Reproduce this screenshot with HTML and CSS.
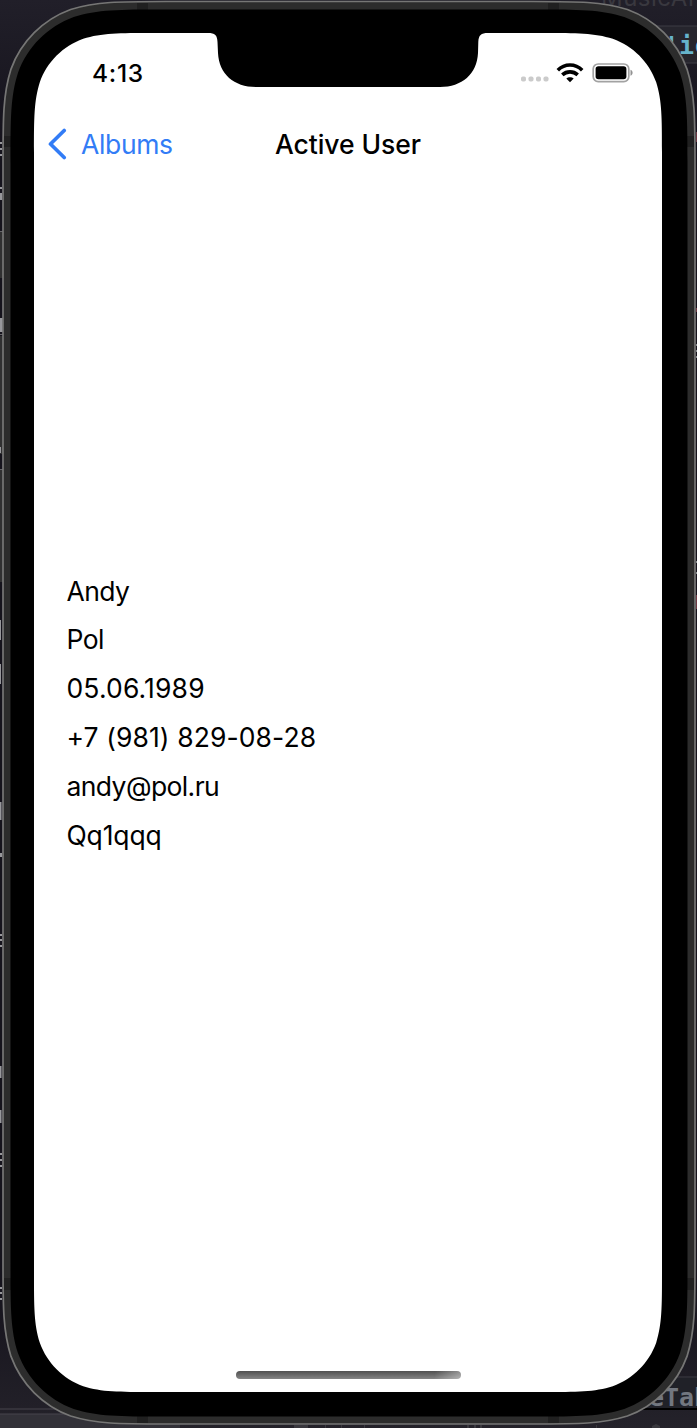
FILE: index.html
```html
<!DOCTYPE html>
<html lang="en">
<head>
<meta charset="utf-8">
<title>Active User</title>
<link rel="stylesheet" href="styles.css">
</head>
<body>
<main class="stage">
  <svg class="backdrop" viewBox="0 0 697 1428" aria-hidden="true">
    <defs>
      <linearGradient id="desk" x1="0" y1="0" x2="0" y2="1">
        <stop offset="0" stop-color="#211f29"/><stop offset=".1" stop-color="#15131c"/>
        <stop offset=".9" stop-color="#15131c"/><stop offset="1" stop-color="#24222a"/>
      </linearGradient>
    </defs>
    <rect width="697" height="1428" fill="url(#desk)"/>
    <rect x="600" y="26" width="97" height="37" fill="#26252d"/>
    <path d="M600 26H697M600 63H697M660 1377H697" stroke="#3d3c44"/>
    <text class="code dim" x="601" y="6">MusicAPI</text>
    <text class="code type" x="664" y="54">'ic</text>
    <rect x="640" y="1378" width="57" height="30" fill="#202128"/>
    <text class="code tab" x="649" y="1406">eTab</text>
    <path d="M640 1409H697" stroke="#000" stroke-width="2"/>
    <rect y="1414" width="180" height="14" fill="#323138"/>
    <path d="M0 1409H60M0 1414H80" stroke="#46454c"/>
    <path d="M0 232h4v46H0zM0 336h4v118H0zM0 470h4v112H0z" fill="#303031"/>
    <path d="M0 231.500h3M0 334.500h3M0 469.500h3" stroke="#66666a"/>
    <path d="M0 142h2v2H0zM0 148h2v2H0zM0 154h2v2H0zM0 187h2v2H0zM0 193h2v7H0zM0 318h3v14H0zM0 447h1v6H0zM0 620h1v20H0zM0 664h1v20H0zM0 802h1.500v18H0zM0 853h2v4H0zM0 934h2v2H0zM0 939h2v2H0zM0 945h2v2H0zM0 1066h1.500v12H0zM0 1110h1.500v13H0zM0 1153h2v2H0zM0 1159h2v2H0zM0 1165h2v2H0zM0 1287h2v2H0zM0 1292h2v2H0zM0 1298h2v2H0z" fill="#98989c"/>
    <path d="M696 344h1v2h-1zM696 350h1v2h-1zM696 356h1v2h-1zM696 561h1v2h-1zM696 572h1v2h-1z" fill="#82878a"/>
    <path d="M696 132h1v10h-1zM696 308h1v4h-1zM696 595h1v14h-1z" fill="#6c3843"/>
    <path d="M294 1425h14v3h-14zM325 1425h1v3h-1zM341 1425h1v3h-1zM364 1425h1v3h-1zM467 1425h2v3h-2zM474 1425h2v3h-2zM480 1425h2v3h-2zM596 1425h1v3h-1zM652 1426l4-2 4 2v2h-8z" fill="#39383e"/>

    <path d="M3 165.100c0-47.100 0-70.700 8-96 10.100-27.700 31.900-49.500 59.600-59.600 25.300-8 48.900-8 96-8H531.400c47.100 0 70.700 0 96 8 27.700 10.100 49.500 31.900 59.600 59.600 8 25.300 8 48.900 8 96V1260.400c0 47.100 0 70.700-8 96-10.100 27.700-31.900 49.500-59.600 59.600-25.300 8-48.900 8-96 8H166.600c-47.100 0-70.700 0-96-8-27.700-10.100-49.500-31.900-59.600-59.600-8-25.300-8-48.900-8-96Z" fill="#2c2c2c" stroke="#767675" stroke-width="1.700"/>
    <path d="M137 3h11v7h-11zM548 3h11v7h-11zM4 136h7v11H4zM687 136h7v11h-7zM4 1278h7v12H4zM687 1278h7v12h-7zM137 1416h11v7h-11zM548 1416h11v7h-11z" fill="#202020"/>
    <path d="M10.500 162.400c0-44 0-66 7.500-89.700 9.400-25.900 29.800-46.200 55.700-55.700 23.700-7.500 45.700-7.500 89.700-7.500H534.600c44 0 66 0 89.700 7.500 25.900 9.400 46.200 29.800 55.700 55.700 7.500 23.700 7.500 45.700 7.500 89.700V1263.600c0 44 0 66-7.500 89.700-9.400 25.900-29.800 46.200-55.700 55.700-23.700 7.500-45.700 7.500-89.700 7.500H163.400c-44 0-66 0-89.700-7.500-25.900-9.400-46.200-29.800-55.700-55.700-7.500-23.700-7.500-45.700-7.500-89.700Z" fill="#000"/>
    <path d="M34 152.200c0-34.300 0-51.500 5.800-70 7.300-20.200 23.200-36.100 43.400-43.400 18.500-5.800 35.600-5.800 70-5.800H542.800c34.300 0 51.500 0 70 5.800 20.200 7.300 36.100 23.200 43.400 43.400 5.800 18.500 5.800 35.600 5.800 70V1272.800c0 34.300 0 51.500-5.800 70-7.300 20.200-23.200 36.100-43.400 43.400-18.500 5.800-35.600 5.800-70 5.800H153.200c-34.300 0-51.500 0-70-5.800-20.200-7.300-36.100-23.200-43.400-43.400-5.800-18.500-5.800-35.600-5.800-70Z" fill="#fff"/>
    <path d="M208 32.500V33C215 33 217.200 35 217.500 42L218 53C219 74 234 87 256 87H440C462 87 477 74 478 53L478.300 42C478.600 35 481 33 488 33V32.500Z" fill="#000"/>
  </svg>

  <div class="screen">
    <header class="status">
      <time class="clock">4:13</time>
      <div class="indicators">
        <svg class="signal" viewBox="0 0 30 6"><g fill="#cbcbcb"><rect x="1" y=".5" width="5" height="5" rx="1.800"/><rect x="8.500" y=".5" width="5" height="5" rx="1.800"/><rect x="16" y=".5" width="5" height="5" rx="1.800"/><rect x="23.500" y=".5" width="5" height="5" rx="1.800"/></g></svg>
        <svg class="wifi" viewBox="0 0 28 20"><g fill="none" stroke="#000" stroke-width="3.600"><path d="M1.800 7.200C8.700.3 19.300.3 26.200 7.200"/><path d="M6.300 11.900C10.700 7.900 17.300 7.900 21.700 11.900"/></g><path d="M10.300 15.500C12.300 13.800 15.700 13.800 17.700 15.500L14 19.300Z"/></svg>
        <svg class="battery" viewBox="0 0 42 20"><rect x="1.200" y="1" width="35.600" height="17.600" rx="5" fill="none" stroke="#a2a2a2" stroke-width="1.700"/><rect x="3.600" y="3.300" width="30.800" height="13" rx="2.800"/><path d="M38.500 6.800C41.300 8 41.300 11.600 38.500 12.800Z" fill="#929292"/></svg>
      </div>
    </header>
    <nav class="navbar">
      <a class="back"><svg class="chevron" viewBox="0 0 20 32"><path d="M16.700 2.500 3 16 16.700 29.500" fill="none" stroke="#327cf6" stroke-width="3.700" stroke-linecap="round" stroke-linejoin="round"/></svg><span>Albums</span></a>
      <h1 class="title">Active User</h1>
    </nav>
    <section class="details">
      <p class="name">Andy</p>
      <p class="name">Pol</p>
      <p class="date">05.06.1989</p>
      <p class="phone">+7 (981) 829-08-28</p>
      <p class="email">andy@pol.ru</p>
      <p class="password">Qq1qqq</p>
    </section>
    <div class="home"></div>
  </div>
</main>
</body>
</html>
```
FILE: styles.css
```css
* { box-sizing: border-box; }
body { margin: 0; background: #15131c; font-family: Inter, "Liberation Sans", sans-serif; color: #000; }
.stage { position: relative; width: 697px; height: 1428px; overflow: hidden; padding: 33px 35px 36px 34px; }
.backdrop { position: absolute; inset: 0; width: 697px; height: 1428px; }
.code { font-family: "DejaVu Sans Mono", monospace; font-size: 25px; }
.dim { fill: #39383f; font-family: Inter, sans-serif; font-size: 24px; letter-spacing: .5px; }
.type { fill: #66b3cc; font-weight: 700; }
.tab { fill: #727780; font-weight: 700; }
.screen { position: relative; height: 1359px; display: flex; flex-direction: column; }
.status { display: flex; justify-content: space-between; height: 80px; padding: 0 28px 0 58px; align-items: center; }
.clock { font-size: 24.500px; font-weight: 550; letter-spacing: .7px; }
.indicators { display: flex; align-items: center; }
.signal { width: 30px; height: 6px; margin: 12px 6px 0 0; }
.wifi { width: 28px; height: 20px; margin-right: 8px; }
.battery { width: 42px; height: 20px; }
.navbar { display: grid; grid-template-columns: 1fr auto 1fr; align-items: center; height: 62px; padding: 0 13px; }
.back { display: flex; align-items: center; gap: 13px; color: #327cf6; font-size: 26.500px; letter-spacing: -.35px; }
.chevron { width: 21px; height: 32px; }
.title { margin: 0; font-size: 26.500px; font-weight: 550; letter-spacing: -.05px; }
.details { flex: 1; padding: 391.500px 32px 0 32.500px; }
.details p { margin: 0; height: 48.900px; line-height: 49px; font-size: 26.500px; letter-spacing: -.6px; }
.details .date { letter-spacing: .15px; }
.details .phone { letter-spacing: .1px; }
.details .password { letter-spacing: -.15px; }
.home { width: 225px; height: 8px; margin: 0 auto 13px 202px; border-radius: 4px; background: linear-gradient(100deg, transparent 88%, #ffffff60), linear-gradient(#505050, #858585); }
```
